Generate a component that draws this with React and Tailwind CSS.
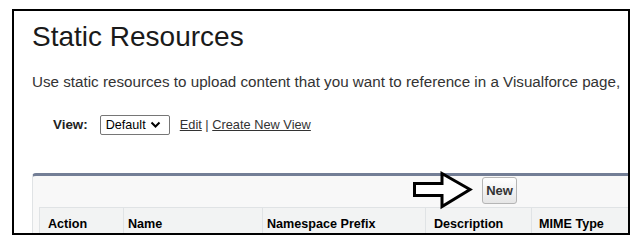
export default function App() {
  return (
    <div className="min-h-screen bg-white pl-[12px] pt-[9px] font-['Liberation_Sans',Arial,sans-serif]">
      <div className="relative h-[226px] w-[618px] overflow-hidden border-2 border-black">
        <div className="pl-[18px] pt-[12px]">
          {/* Title */}
          <h1 className="text-[28px] leading-[28px] text-[#1a1a1a]">Static Resources</h1>
          <p className="mt-[22px] whitespace-nowrap text-[15.2px] leading-[18px] text-[#333]">
            Use static resources to upload content that you want to reference in a Visualforce page,
          </p>

          {/* View selector */}
          <div className="ml-[21px] mt-[24px] flex h-[20px] items-center">
            <span className="text-[13.4px] font-bold text-[#222]">View:</span>
            <div className="ml-[12px] flex h-[20px] w-[70px] items-center rounded-[2px] border border-[#767676] bg-white pl-[5px] text-[12.6px] text-black">
              <span>Default</span>
              <svg width="11" height="8" viewBox="0 0 11 8" className="ml-[4px]">
                <polyline points="1.5,1.5 5.5,5.5 9.5,1.5" fill="none" stroke="#000" strokeWidth="2" />
              </svg>
            </div>
            <span className="ml-[10px] text-[12.8px] text-[#333]">
              <span className="underline">Edit</span> | <span className="underline">Create New View</span>
            </span>
          </div>

          {/* List panel */}
          <div className="mt-[38px] w-[700px] rounded-tl-[4px] border-l border-t-[3px] border-l-[#e0e3e5] border-t-[#737e96] bg-[#f8f8f8] pb-[10px]">
            <div className="flex pl-[449px] pt-[1px]">
              <button className="flex h-[27px] w-[35px] items-center justify-center rounded-[3px] border border-[#b5b5b5] bg-gradient-to-b from-white to-[#e6e6e6] text-[13px] font-bold text-[#333]">
                New
              </button>
            </div>
            <div className="ml-[6px] mt-[3px] flex border-t border-[#e0e3e5] bg-[#f2f3f3] text-[12.6px] font-bold leading-[15px] text-black">
              <div className="w-[84px] border-l border-[#e0e3e5] pb-[8px] pl-[8px] pt-[9px]">Action</div>
              <div className="w-[139px] border-l border-[#e0e3e5] pb-[8px] pl-[4px] pt-[9px]">Name</div>
              <div className="w-[163px] border-l border-[#e0e3e5] pb-[8px] pl-[4px] pt-[9px]">Namespace Prefix</div>
              <div className="w-[106px] border-l border-[#e0e3e5] pb-[8px] pl-[8px] pt-[9px]">Description</div>
              <div className="w-[140px] border-l border-[#e0e3e5] pb-[8px] pl-[7px] pt-[9px]">MIME Type</div>
            </div>
          </div>
        </div>

        {/* Annotation arrow pointing at New */}
        <svg
          width="68"
          height="44"
          viewBox="0 0 68 44"
          className="absolute left-[396px] top-[157px]"
        >
          <polygon
            points="4.5,15.5 32,15.5 32,5.5 60,21.5 32,38.5 32,27.5 4.5,27.5"
            fill="#fff"
            stroke="#000"
            strokeWidth="3"
            strokeLinejoin="miter"
          />
        </svg>
      </div>
    </div>
  );
}
